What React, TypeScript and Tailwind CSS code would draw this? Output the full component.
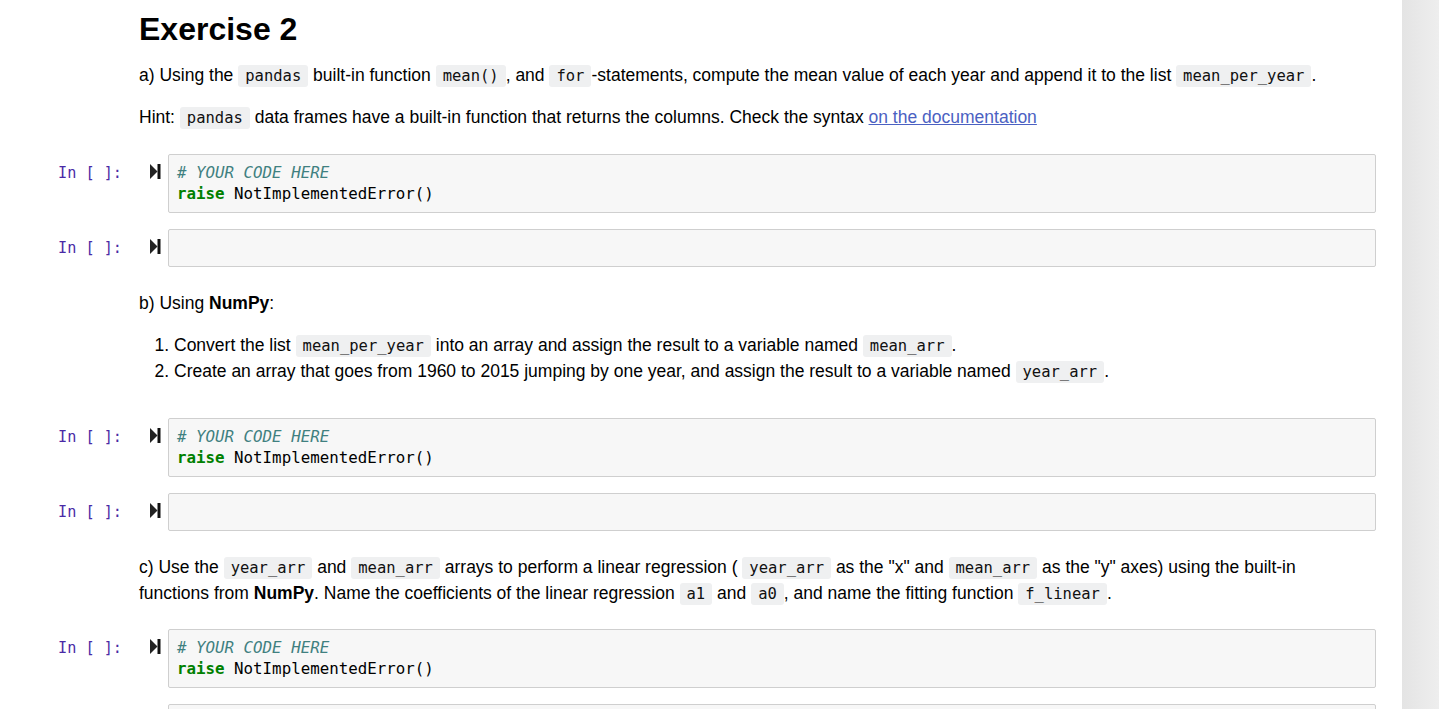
import React from "react";

const mono = { fontFamily: '"DejaVu Sans Mono", "Liberation Mono", monospace' };

function C({ children }: { children: React.ReactNode }) {
  return (
    <code
      className="rounded-[3px] bg-[#eff0f1] px-[7px] py-[2px] text-[15.5px] text-[#111]"
      style={mono}
    >
      {children}
    </code>
  );
}

function RunIcon() {
  return (
    <svg width="11" height="15" viewBox="0 0 11 15" className="block">
      <polygon points="0,0 7.5,7.5 0,15" fill="#222" />
      <rect x="7.5" y="0" width="3" height="15" fill="#111" />
    </svg>
  );
}

function CodeCell({ lines }: { lines: number }) {
  return (
    <div className="flex items-start pl-[58px] pr-[26px]">
      <div
        className="w-[92px] shrink-0 pt-[9px] text-[15.2px] leading-[21px] text-[#4a2aa6]"
        style={mono}
      >
        In [ ]:
      </div>
      <div className="w-[18px] shrink-0 pt-[10px]">
        <RunIcon />
      </div>
      <div
        className="flex-1 rounded-[2px] border border-[#cfcfcf] bg-[#f7f7f7] px-[8px] pt-[7px] pb-[8px] text-[15.8px] leading-[21px] text-black"
        style={mono}
      >
        {lines === 0 ? (
          <div className="h-[21px]" />
        ) : (
          <>
            <div className="italic text-[#408080]"># YOUR CODE HERE</div>
            <div>
              <span className="font-bold text-[#008000]">raise</span> NotImplementedError()
            </div>
          </>
        )}
      </div>
    </div>
  );
}

export default function App() {
  return (
    <div
      className="flex h-[709px] w-[1439px] overflow-hidden bg-white text-black"
      style={{ fontFamily: '"Liberation Sans", Arial, sans-serif' }}
    >
      <main className="flex-1">
        <div className="pl-[139px] pr-[40px]">
          <h1 className="mt-[10px] text-[32px] font-bold leading-[38px]">Exercise 2</h1>
          <p className="mt-[15px] text-[17.5px] leading-[25px]">
            a) Using the <C>pandas</C> built-in function <C>mean()</C>, and <C>for</C>-statements, compute the mean
            value of each year and append it to the list <C>mean_per_year</C>.
          </p>
          <p className="mt-[16px] text-[17.5px] leading-[25px]">
            Hint: <C>pandas</C> data frames have a built-in function that returns the columns. Check the syntax{" "}
            <a className="text-[#4b61c2] underline" href="#">
              on the documentation
            </a>
          </p>
        </div>

        <div className="mt-[23px]">
          <CodeCell lines={2} />
        </div>
        <div className="mt-[16px]">
          <CodeCell lines={0} />
        </div>

        <div className="pl-[139px] pr-[40px]">
          <p className="mt-[24px] text-[17.5px] leading-[25px]">
            b) Using <b>NumPy</b>:
          </p>
          <ol className="mt-[17px] list-decimal pl-[35px] text-[17.5px] leading-[25px]">
            <li>
              Convert the list <C>mean_per_year</C> into an array and assign the result to a variable named{" "}
              <C>mean_arr</C>.
            </li>
            <li>
              Create an array that goes from 1960 to 2015 jumping by one year, and assign the result to a variable
              named <C>year_arr</C>.
            </li>
          </ol>
        </div>

        <div className="mt-[33px]">
          <CodeCell lines={2} />
        </div>
        <div className="mt-[16px]">
          <CodeCell lines={0} />
        </div>

        <div className="pl-[139px] pr-[40px]">
          <p className="mt-[24px] max-w-[1190px] text-[17.5px] leading-[25px]">
            c) Use the <C>year_arr</C> and <C>mean_arr</C> arrays to perform a linear regression ( <C>year_arr</C>{" "}
            as the "x" and <C>mean_arr</C> as the "y" axes) using the built-in functions from <b>NumPy</b>. Name the
            coefficients of the linear regression <C>a1</C> and <C>a0</C>, and name the fitting function{" "}
            <C>f_linear</C>.
          </p>
        </div>

        <div className="mt-[22px]">
          <CodeCell lines={2} />
        </div>
        <div className="mt-[16px]">
          <CodeCell lines={0} />
        </div>
      </main>
      <aside className="w-[37px] shrink-0 bg-gradient-to-r from-[#e4e4e4] to-[#eeeeee]" />
    </div>
  );
}
